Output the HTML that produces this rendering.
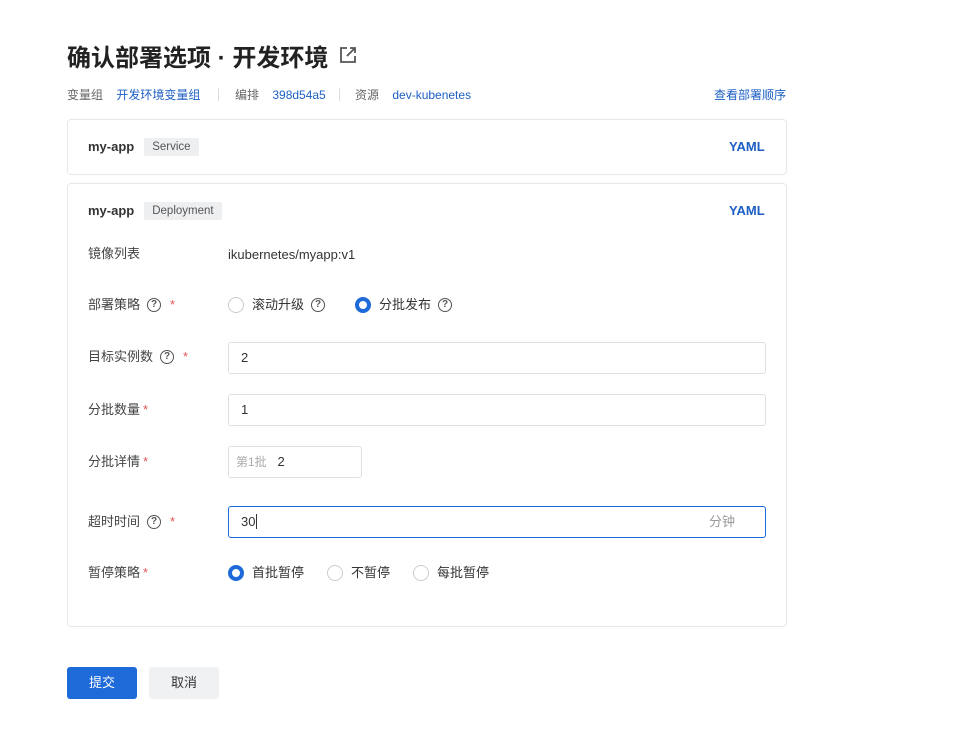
<!DOCTYPE html>
<html><head><meta charset="utf-8"><style>
*{box-sizing:border-box;margin:0;padding:0}
body{width:970px;height:730px;background:#fff;font-family:"Liberation Sans","Noto Sans CJK SC",sans-serif;color:#333;position:relative;overflow:hidden;font-size:13px}
.a{position:absolute;line-height:18px}
h1{position:absolute;left:67px;top:42px;font-size:24px;font-weight:700;color:#222;line-height:34px}
.meta{font-size:12px;color:#666;top:86px}
.blue{color:#1d5fc4}
.card{position:absolute;left:67px;width:720px;border:1px solid #e6e8eb;border-radius:4px}
.tag{display:inline-block;background:#eeeff1;color:#555;font-size:11.5px;line-height:14px;padding:2px 8px;border-radius:2px;margin-left:10px;font-weight:400;vertical-align:1px}
.name{font-weight:700;font-size:13px;color:#333}
.yaml{font-weight:700;color:#1d5fc4;font-size:13px}
.lab{left:88px;font-size:13px;color:#444;display:flex;align-items:center}
.star{color:#e05555;margin-left:3px}
.q{display:inline-block;width:14px;height:14px;border:1.3px solid #555;border-radius:50%;font-size:10px;line-height:11.5px;text-align:center;color:#555;font-weight:700;margin-left:7px;flex:none}
.inp{position:absolute;left:228px;height:32px;border:1px solid #dde0e4;border-radius:3px;padding-left:12px;line-height:30px;font-size:13px;color:#333}
.r{display:inline-block;width:16px;height:16px;border:1px solid #c8ccd2;border-radius:50%;margin-right:8px;flex:none}
.r.on{border:4.5px solid #1d6ad8}
.row{display:flex;align-items:center}
.btn{position:absolute;top:667px;height:32px;width:70px;border-radius:3px;text-align:center;line-height:32px;font-size:13px}
</style></head><body>
<h1>确认部署选项 · 开发环境 <svg width="18" height="18" viewBox="0 0 18 18" style="vertical-align:2px;margin-left:4px" fill="none" stroke="#555" stroke-width="1.8"><path d="M8 2H2v14h14v-6"/><path d="M11 2h5v5M16 2 8 10"/></svg></h1>
<div class="a meta" style="left:67px">变量组&nbsp;&nbsp;&nbsp;&nbsp;<span class="blue">开发环境变量组</span></div>
<div class="a" style="left:218px;top:88px;width:1px;height:13px;background:#ddd"></div>
<div class="a meta" style="left:235px">编排&nbsp;&nbsp;&nbsp;&nbsp;<span class="blue">398d54a5</span></div>
<div class="a" style="left:339px;top:88px;width:1px;height:13px;background:#ddd"></div>
<div class="a meta" style="left:355px">资源&nbsp;&nbsp;&nbsp;&nbsp;<span class="blue">dev-kubenetes</span></div>
<div class="a meta blue" style="left:714px">查看部署顺序</div>
<div class="card" style="top:119px;height:56px"></div>
<div class="a" style="left:88px;top:138px"><span class="name">my-app</span><span class="tag">Service</span></div>
<div class="a yaml" style="left:729px;top:138px">YAML</div>
<div class="card" style="top:183px;height:444px"></div>
<div class="a" style="left:88px;top:202px"><span class="name">my-app</span><span class="tag">Deployment</span></div>
<div class="a yaml" style="left:729px;top:202px">YAML</div>
<div class="a lab" style="top:245px">镜像列表</div>
<div class="a" style="left:228px;top:246px;color:#333">ikubernetes/myapp:v1</div>
<div class="a lab" style="top:296px">部署策略<span class="q">?</span><span class="star" style="margin-left:9px">*</span></div>
<div class="a row" style="left:228px;top:296px"><span class="r"></span>滚动升级<span class="q">?</span><span style="width:30px"></span><span class="r on"></span>分批发布<span class="q">?</span></div>
<div class="a lab" style="top:348px">目标实例数<span class="q">?</span><span class="star" style="margin-left:9px">*</span></div>
<div class="inp" style="top:342px;width:538px">2</div>
<div class="a lab" style="top:401px">分批数量<span class="star">*</span></div>
<div class="inp" style="top:394px;width:538px">1</div>
<div class="a lab" style="top:453px">分批详情<span class="star">*</span></div>
<div class="inp" style="top:446px;width:134px;padding-left:7px"><span style="color:#aaa;font-size:12px">第1批</span>&nbsp;&nbsp;&nbsp;2</div>
<div class="a lab" style="top:513px">超时时间<span class="q">?</span><span class="star" style="margin-left:9px">*</span></div>
<div class="inp" style="top:506px;width:538px;border-color:#1d6ad8">30<span style="border-left:1px solid #333;margin-left:1px"></span><span style="position:absolute;right:30px;color:#999">分钟</span></div>
<div class="a lab" style="top:564px">暂停策略<span class="star">*</span></div>
<div class="a row" style="left:228px;top:564px"><span class="r on"></span>首批暂停<span style="width:23px"></span><span class="r"></span>不暂停<span style="width:23px"></span><span class="r"></span>每批暂停</div>
<div class="btn" style="left:67px;background:#1d6ad8;color:#fff">提交</div>
<div class="btn" style="left:149px;background:#f0f1f3;color:#333">取消</div>
</body></html>
